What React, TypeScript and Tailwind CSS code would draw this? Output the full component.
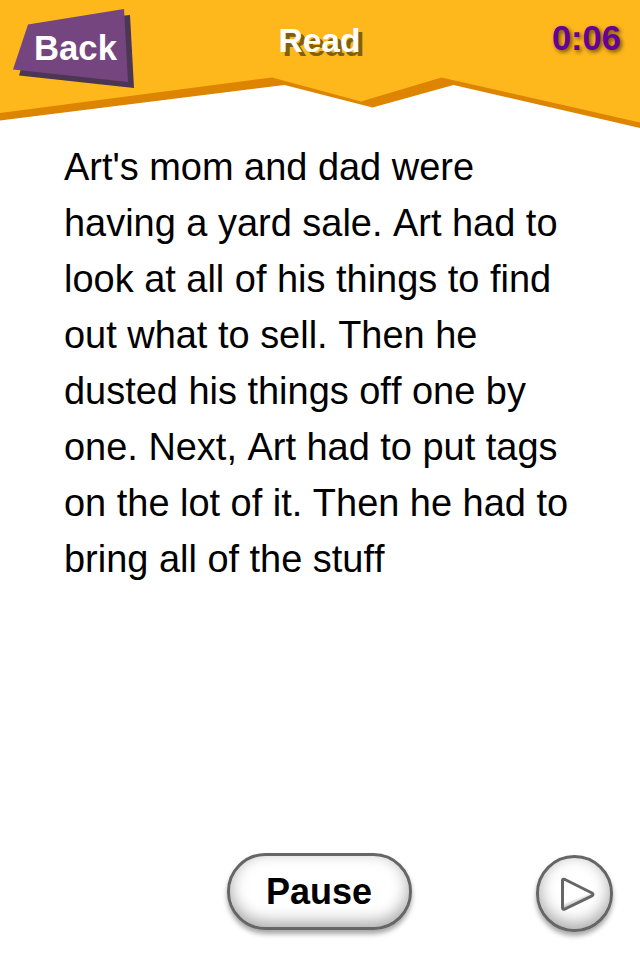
import React from 'react';

const LINES = [
  "Art's mom and dad were",
  'having a yard sale. Art had to',
  'look at all of his things to find',
  'out what to sell. Then he',
  'dusted his things off one by',
  'one. Next, Art had to put tags',
  'on the lot of it. Then he had to',
  'bring all of the stuff',
];

function Header() {
  return (
    <header className="relative h-[130px] w-full shrink-0">
      <svg className="absolute inset-0" width="640" height="130" viewBox="0 0 640 130">
        <path d="M0 0H640V128L453.500 85L372.500 107.500L284.500 85L0 120.500Z" fill="#dd8500" />
        <path d="M0 0H640V122.500L441.500 77.500L361 101.500L272 77.500L0 113Z" fill="#ffb81c" />
      </svg>
      <div className="relative grid grid-cols-[1fr_auto_1fr] items-start font-bold leading-10">
        <button className="relative h-[90px] w-[140px] text-white">
          <svg className="absolute inset-0" width="140" height="90" viewBox="0 0 140 90">
            <path d="M34 24L130 15L134 88L19 75.500Z" fill="#4b3653" />
            <path d="M28 24.500L124 9L128 82L13 69.500Z" fill="#75457f" />
          </svg>
          <span className="relative block pt-[5px] pl-[11px] text-[34.700px]">Back</span>
        </button>
        <h1 className="pt-[21px] pr-px text-[33.500px] text-white [text-shadow:4px_4px_0_#80600f]">Read</h1>
        <span className="pt-[18px] pr-[19px] text-right text-[34.500px] text-[#660099] [text-shadow:2px_2px_4px_rgba(0,0,0,0.6)]">0:06</span>
      </div>
    </header>
  );
}

export default function App() {
  return (
    <div className="flex h-[960px] w-[640px] flex-col overflow-hidden bg-white font-['Liberation_Sans',Arial,sans-serif] text-black">
      <Header />
      <main className="flex-1 px-16 pt-[9px] text-[37.950px] leading-[56px] [font-kerning:none]">
        {LINES.map((line) => (
          <p key={line} className="whitespace-nowrap">{line}</p>
        ))}
      </main>
      <footer className="grid h-[108px] shrink-0 grid-cols-[1fr_auto_1fr] items-start pr-[27px] pl-[25px]">
        <button className="col-start-2 mt-[0.500px] h-[77px] w-[185px] rounded-full border-[3px] border-[#666] bg-white pt-[2px] text-[36px] font-bold shadow-[0_4px_5px_rgba(0,0,0,0.35),inset_0_-5px_16px_rgba(0,0,0,0.35)]">
          Pause
        </button>
        <button
          aria-label="Next"
          className="mt-[3px] flex size-[77px] items-center justify-center justify-self-end rounded-full border-[3px] border-[#666] bg-white shadow-[0_4px_5px_rgba(0,0,0,0.35),inset_0_-5px_16px_rgba(0,0,0,0.35)]"
        >
          <svg className="ml-[6px] shrink-0" width="36" height="36" viewBox="0 0 36 36">
            <defs>
              <linearGradient id="play" x1="0.4" y1="0.3" x2="0.6" y2="0.8">
                <stop offset="0.6" stopColor="#fff" />
                <stop offset="1" stopColor="#aaa" />
              </linearGradient>
            </defs>
            <path d="M2.500 4.500Q2.500 2.500 5 3.500L32 17Q34 18.500 32 19.800L5 33Q2.500 34 2.500 31.500Z" fill="url(#play)" stroke="#666" strokeWidth="3" strokeLinejoin="round" />
          </svg>
        </button>
      </footer>
    </div>
  );
}
